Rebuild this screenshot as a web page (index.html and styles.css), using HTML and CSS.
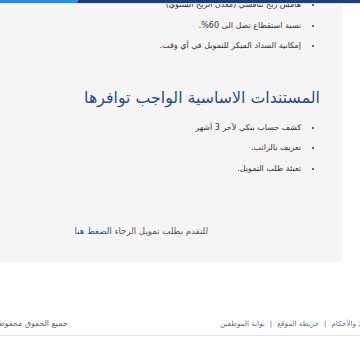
FILE: index.html
```html
<!DOCTYPE html>
<html lang="ar" dir="rtl">
<head>
    <meta charset="UTF-8">
    <meta name="viewport" content="width=device-width, initial-scale=1.0">
    <title>التمويل الشخصي</title>
    <link rel="stylesheet" href="styles.css">
</head>
<body>
    <div class="topbar">
        <div class="topbar-dark"></div>
        <div class="topbar-light"></div>
    </div>
    <div class="panel">
        <ul class="features">
            <li>هامش ربح تنافسي (معدل الربح السنوي)</li>
            <li>نسبة استقطاع تصل الى 60%.</li>
            <li>إمكانية السداد المبكر للتمويل في أي وقت.</li>
        </ul>
        <h2 class="section-title">المستندات الاساسية الواجب توافرها</h2>
        <ul class="features">
            <li>كشف حساب بنكي لآخر 3 أشهر</li>
            <li>تعريف بالراتب.</li>
            <li>تعبئة طلب التمويل.</li>
        </ul>
        <p class="apply">للتقدم بطلب تمويل الرجاء <a href="#">الضغط هنا</a></p>
    </div>
    <div class="footer">
        <div class="footer-links">
            <a href="#">الشروط والأحكام</a><span class="sep">|</span><a href="#">خريطة الموقع</a><span class="sep">|</span><a href="#">بوابة الموظفين</a>
        </div>
        <div class="copyright">جميع الحقوق محفوظة</div>
    </div>
</body>
</html>
```

FILE: styles.css
```css
html, body {
    overflow: hidden;
}

body {
    margin: 0;
    background: #ffffff;
    font-family: "DejaVu Sans", sans-serif;
    color: #333;
    direction: rtl;
}

.topbar {
    position: fixed;
    top: 0;
    left: 0;
    right: 0;
    height: 3px;
    display: flex;
    z-index: 2;
    border-bottom: 1px solid #d9e2ee;
}

.topbar-dark {
    flex: 1;
    background: #1c3f7b;
}

.topbar-light {
    width: 78px;
    background: #2a8de4;
}

.panel {
    margin-right: 18px;
    height: 262px;
    background: #f5f5f5;
    overflow: hidden;
}

.features {
    margin: -5px 0 0;
    padding: 0 39px 0 0;
    font-size: 8px;
    line-height: 20.5px;
}

.features li {
    padding-right: 2px;
}

.section-title {
    margin: 31px 22px 16px 0;
    font-size: 15.8px;
    font-weight: normal;
    color: #2d4b7b;
}

.apply {
    margin: 47px 134px 0 0;
    font-size: 8.6px;
    color: #555;
}

.apply a {
    color: #2d4b7b;
    text-decoration: none;
}

.footer {
    display: flex;
    justify-content: space-between;
    align-items: center;
    margin: 57px -23px 0 -6px;
    padding-bottom: 7px;
    border-bottom: 1px solid #e4e4e4;
    font-size: 7.2px;
    color: #666;
    white-space: nowrap;
}

.footer a {
    color: #667590;
    text-decoration: none;
}

.sep {
    margin: 0 5px;
    color: #667590;
}

.copyright {
    font-size: 8px;
}
```
